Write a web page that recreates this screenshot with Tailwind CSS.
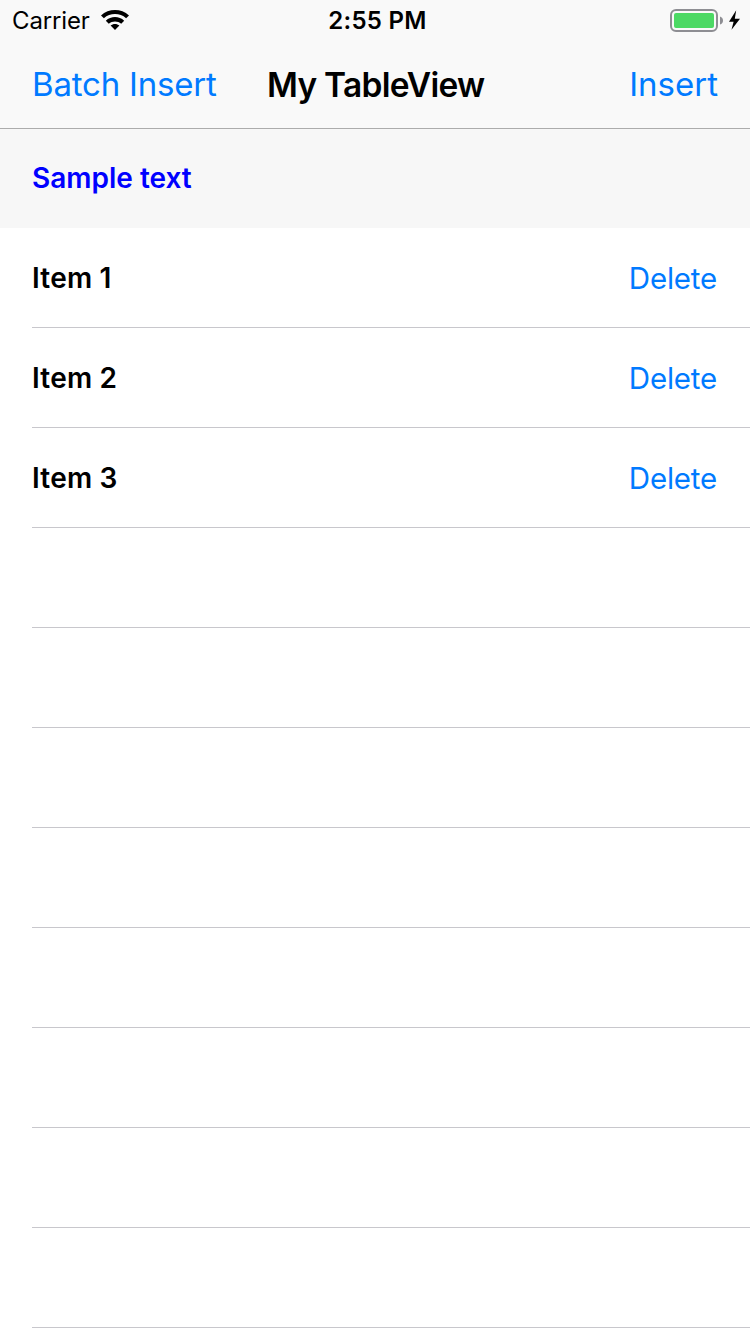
<!DOCTYPE html>
<html lang="en"><head><meta charset="utf-8"><title>My TableView</title>
<script src="https://cdn.jsdelivr.net/npm/@tailwindcss/browser@4"></script></head>
<body class="bg-white w-[750px] h-[1334px] overflow-hidden font-['Inter',sans-serif] text-black">
<header class="h-[129px] bg-[#f9f9f9] border-b border-[#acacac]">
<div class="h-[41px] grid grid-cols-3 items-center pl-3 pr-[9px] text-2xl">
<div class="flex items-center gap-[11px]"><span class="whitespace-nowrap tracking-[-0.15px]">Carrier</span>
<svg class="w-7 h-5 mb-0.5" viewBox="0 0 28 20"><path d="M0 5.4C7.7-1.8 20.3-1.8 28 5.4L25.1 8.3C19 2.7 9 2.7 2.9 8.3ZM4.8 10.7C9.9 5.9 18.1 5.9 23.2 10.7L20.2 13.7C16.8 10.7 11.2 10.7 7.8 13.7ZM9.6 15.6C12 13.3 16 13.3 18.4 15.6L14 20Z"/></svg></div>
<div class="text-center font-[560] tracking-[0.3px] whitespace-nowrap pl-[2px]">2:55 PM</div>
<div class="flex items-center justify-end"><svg class="w-[71px] h-6" viewBox="0 0 71 24"><rect x="1" y="1" width="46" height="21" rx="5" fill="none" stroke="#8e8e93" stroke-width="2"/><rect x="4" y="4" width="40" height="15" rx="2" fill="#4cd964"/><path d="M50 7.5Q53 8.5 53 11.5Q53 14.5 50 15.5Z" fill="#8e8e93"/><path d="M66.2 1.3L59 12.7H63.6L61.5 20.8L70 9.7H64.8Z"/></svg></div>
</div>
<nav class="h-[88px] grid grid-cols-[235px_1fr_auto] items-center pl-8 pr-8 text-[33px] whitespace-nowrap"><span class="text-[#007aff] tracking-[-0.2px]">Batch Insert</span><span class="font-[560] text-[33.5px] tracking-[-0.75px]">My TableView</span><span class="text-[#007aff] text-right">Insert</span></nav>
</header>
<section class="h-[99px] bg-[#f7f7f7] flex items-center px-8 pb-px text-[28px] font-[560] text-[#0000ff]"><span>Sample text</span></section>
<ul class="pl-8">
<li class="h-[100px] border-b border-[#c8c7cc] flex items-center justify-between pr-[33px] pt-0.5"><span class="text-[28px] font-[560] tracking-[0.2px] pb-0.5">Item 1</span><span class="text-[29.5px] tracking-[-0.2px] text-[#007aff]">Delete</span></li>
<li class="h-[100px] border-b border-[#c8c7cc] flex items-center justify-between pr-[33px] pt-0.5"><span class="text-[28px] font-[560] tracking-[0.2px] pb-0.5">Item 2</span><span class="text-[29.5px] tracking-[-0.2px] text-[#007aff]">Delete</span></li>
<li class="h-[100px] border-b border-[#c8c7cc] flex items-center justify-between pr-[33px] pt-0.5"><span class="text-[28px] font-[560] tracking-[0.2px] pb-0.5">Item 3</span><span class="text-[29.5px] tracking-[-0.2px] text-[#007aff]">Delete</span></li>
<li class="h-[100px] border-b border-[#c8c7cc]"></li>
<li class="h-[100px] border-b border-[#c8c7cc]"></li>
<li class="h-[100px] border-b border-[#c8c7cc]"></li>
<li class="h-[100px] border-b border-[#c8c7cc]"></li>
<li class="h-[100px] border-b border-[#c8c7cc]"></li>
<li class="h-[100px] border-b border-[#c8c7cc]"></li>
<li class="h-[100px] border-b border-[#c8c7cc]"></li>
<li class="h-[100px] border-b border-[#c8c7cc]"></li>
</ul>
</body></html>
